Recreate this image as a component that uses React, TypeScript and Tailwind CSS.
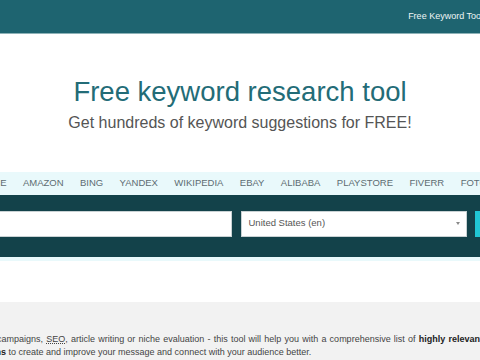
import React from 'react';

const tabs = ['GOOGLE', 'YOUTUBE', 'AMAZON', 'BING', 'YANDEX', 'WIKIPEDIA', 'EBAY', 'ALIBABA', 'PLAYSTORE', 'FIVERR', 'FOTOLIA', 'NEWS'];

const font = { fontFamily: '"Liberation Sans", Arial, sans-serif' };

export default function App() {
    return (
        <div className="w-[480px] h-[360px] overflow-hidden bg-white" style={font}>
            {/* Top bar */}
            <header className="h-[34px] bg-[#1e6470] border-b border-[#8db2b7] flex items-center justify-end">
                <span className="text-[9px] text-[#eef5f5] whitespace-nowrap -mr-[3px]">Free Keyword Tool</span>
            </header>

            {/* Hero */}
            <div className="pt-[44px] text-center">
                <h1 className="text-[27.5px] leading-[27.5px] text-[#236c77]">Free keyword research tool</h1>
                <p className="mt-[9px] text-[16px] leading-[16px] text-[#555555]">Get hundreds of keyword suggestions for FREE!</p>
            </div>

            {/* Search block */}
            <div className="mt-[41px] bg-[#e9f9fb] pb-[4px]">
                <nav className="h-[23px] flex items-center gap-[16.4px] -ml-[97px] whitespace-nowrap">
                    {tabs.map((t) => (
                        <span key={t} className="text-[9.5px] text-[#5d6c72]">{t}</span>
                    ))}
                </nav>
                <div className="h-[62px] bg-[#13424a] pt-[16px]">
                    <div className="flex gap-[8.5px] -ml-[100px] w-[680px]">
                        <input
                            className="w-[332px] h-[26px] bg-white border border-[#c9d2d4] outline-none shrink-0"
                            aria-label="keyword"
                        />
                        <div className="w-[226px] h-[26px] bg-white border border-[#c9d2d4] flex items-center justify-between pl-[7px] pr-[6px] shrink-0">
                            <span className="text-[9.5px] text-[#555555]">United States (en)</span>
                            <span className="w-0 h-0 border-l-[2.5px] border-r-[2.5px] border-t-[3px] border-l-transparent border-r-transparent border-t-[#8a8a8a]"></span>
                        </div>
                        <button className="w-[90px] h-[26px] bg-[#20c6d4] shrink-0"></button>
                    </div>
                </div>
            </div>

            {/* Intro */}
            <section className="mt-[41px] bg-[#f2f2f2] pt-[31px] h-[200px]">
                <p className="w-[569px] -ml-[86px] text-[9px] leading-[13.5px] text-[#444444] text-justify">
                    Use it for your PPC campaigns, <abbr className="underline decoration-dotted">SEO</abbr>, article writing or niche evaluation - this tool will help you with a comprehensive list of <b className="text-[#222222]">highly relevant keyword suggestions</b> to create and improve your message and connect with your audience better.
                </p>
            </section>
        </div>
    );
}
